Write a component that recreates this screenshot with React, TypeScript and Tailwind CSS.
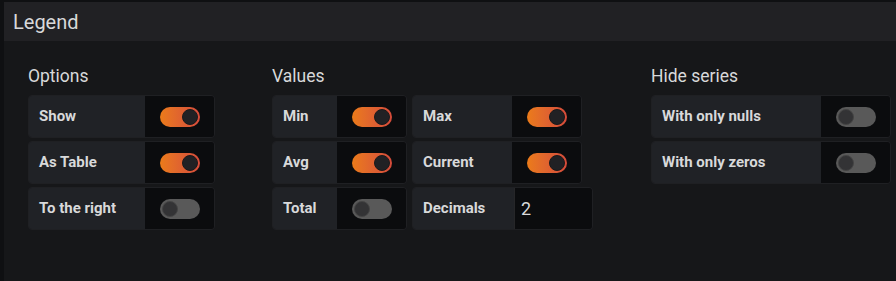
import React from 'react'

function Switch({ on }: { on: boolean }) {
  return (
    <div className="w-[69px] bg-[#0b0c0e] flex items-center justify-center shrink-0">
      {on ? (
        <div className="w-[40px] h-[20px] rounded-full bg-gradient-to-r from-[#eb7b18] to-[#d44a3a] flex items-center justify-end pr-[2px]">
          <div className="w-[16px] h-[16px] rounded-full bg-[#212124] border border-[#1a1a1c]"></div>
        </div>
      ) : (
        <div className="w-[40px] h-[20px] rounded-full bg-[#595959] flex items-center justify-start pl-[2px]">
          <div className="w-[16px] h-[16px] rounded-full bg-[#333335] border border-[#444]"></div>
        </div>
      )}
    </div>
  )
}

function Row({ label, labelW, on }: { label: string; labelW: string; on: boolean }) {
  return (
    <div className="flex h-[43px] rounded-sm overflow-hidden border border-[#1f2023]">
      <div className={`${labelW} bg-[#202226] flex items-center px-[10px] text-[15px] font-bold text-[#d8d9da]`}>
        {label}
      </div>
      <Switch on={on} />
    </div>
  )
}

export default function App() {
  return (
    <div className="w-[896px] h-[281px] bg-[#0f1012] pt-[2px] pl-[4px] overflow-hidden" style={{ fontFamily: 'Roboto, "Liberation Sans", sans-serif' }}>
      <div className="h-full bg-[#161719] flex flex-col">
        <div className="h-[39px] bg-[#212124] flex items-center pl-[9px] text-[20px] text-[#d8d9da]">
          Legend
        </div>
        <div className="flex pl-[24px] pt-[25px]">
          {/* Options */}
          <div className="w-[187px] flex flex-col">
            <div className="text-[17.5px] text-[#d8d9da] leading-[21px] mb-[8px]">Options</div>
            <div className="flex flex-col gap-[3px]">
              <Row label="Show" labelW="w-[117px]" on={true} />
              <Row label="As Table" labelW="w-[117px]" on={true} />
              <Row label="To the right" labelW="w-[117px]" on={false} />
            </div>
          </div>

          {/* Values */}
          <div className="ml-[57px] flex flex-col">
            <div className="text-[17.5px] text-[#d8d9da] leading-[21px] mb-[8px]">Values</div>
            <div className="grid grid-cols-[135px_auto] gap-x-[5px] gap-y-[3px] items-start">
              <Row label="Min" labelW="w-[64px]" on={true} />
              <div className="w-[170px]"><Row label="Max" labelW="w-[99px]" on={true} /></div>
              <Row label="Avg" labelW="w-[64px]" on={true} />
              <div className="w-[170px]"><Row label="Current" labelW="w-[99px]" on={true} /></div>
              <Row label="Total" labelW="w-[64px]" on={false} />
              <div className="flex h-[43px] w-[181px] rounded-sm overflow-hidden border border-[#1f2023]">
                <div className="w-[101px] bg-[#202226] flex items-center px-[10px] text-[15px] font-bold text-[#d8d9da]">
                  Decimals
                </div>
                <div className="flex-1 bg-[#0b0c0e] flex items-center px-[6px] text-[18px] text-[#d8d9da] border-l border-[#262628]">
                  2
                </div>
              </div>
            </div>
          </div>

          {/* Hide series */}
          <div className="ml-[58px] w-[240px] flex flex-col">
            <div className="text-[17.5px] text-[#d8d9da] leading-[21px] mb-[8px]">Hide series</div>
            <div className="flex flex-col gap-[3px]">
              <Row label="With only nulls" labelW="w-[170px]" on={false} />
              <Row label="With only zeros" labelW="w-[170px]" on={false} />
            </div>
          </div>
        </div>
      </div>
    </div>
  )
}
